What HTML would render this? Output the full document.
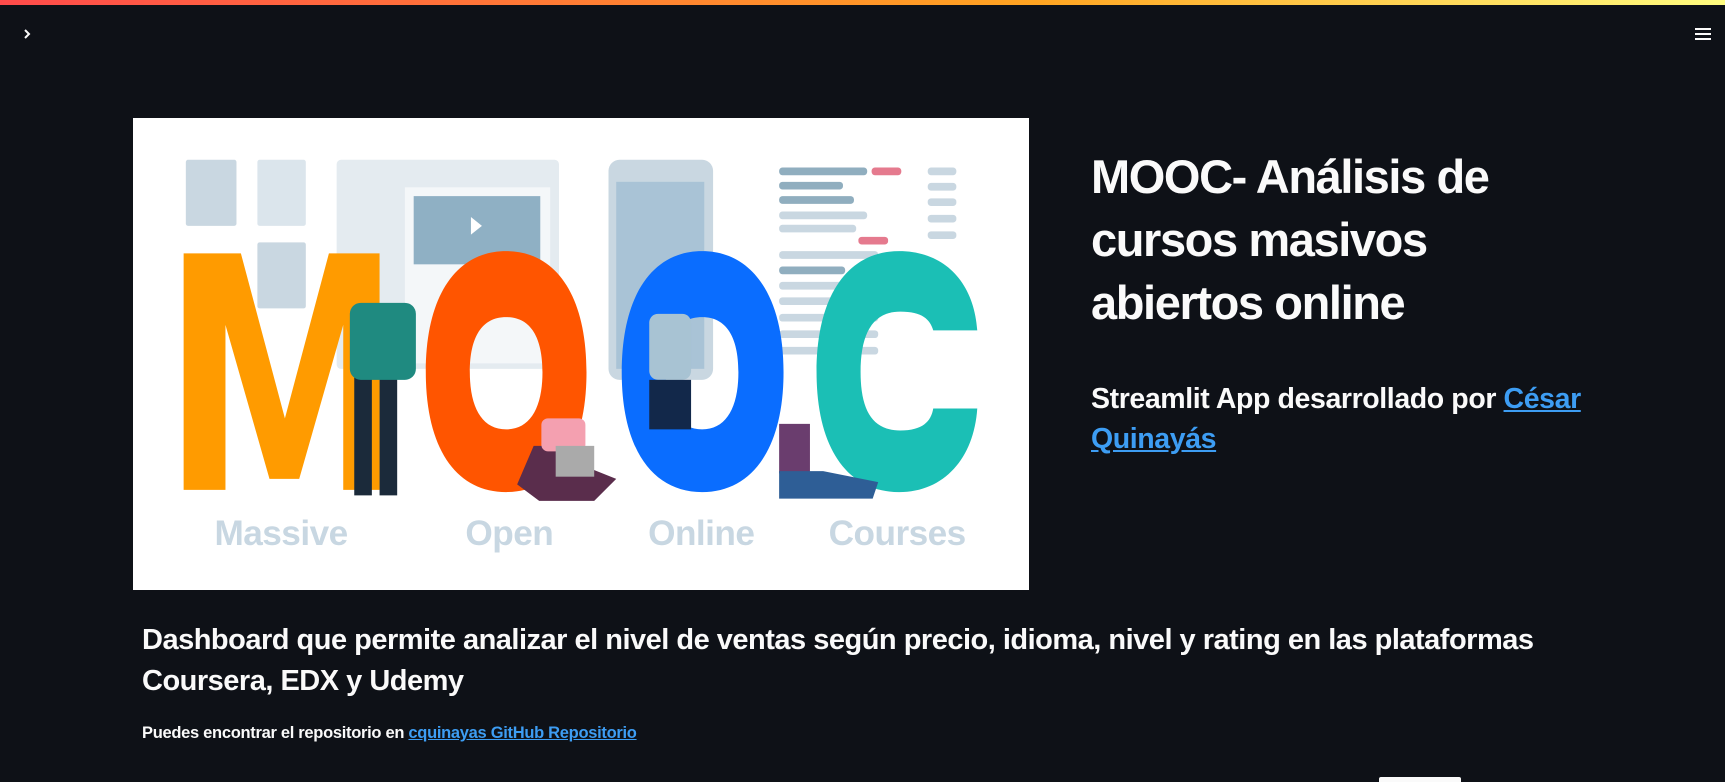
<!DOCTYPE html>
<html><head><meta charset="utf-8">
<style>
html,body{margin:0;padding:0;width:1725px;height:782px;overflow:hidden;background:#0e1117;font-family:"Liberation Sans",sans-serif;color:#fafafa}
.bar{position:absolute;left:0;top:0;width:1725px;height:5px;background:linear-gradient(90deg,#ff4b4b,#ffa421 60%,#fffd80)}
.abs{position:absolute}
a{color:#3d9df3;text-decoration:underline}
h1{position:absolute;left:1091px;top:145px;margin:0;font-size:47px;line-height:63px;letter-spacing:-1.4px;font-weight:bold;width:440px}
.sub{left:1091px;top:379px;font-size:28.5px;line-height:40px;font-weight:bold;letter-spacing:-0.4px;width:510px}
.dash{left:142px;top:620px;font-size:29px;line-height:41px;font-weight:bold;letter-spacing:-0.5px;width:1420px}
.small{left:142px;top:723px;font-size:16.5px;line-height:20px;font-weight:bold;letter-spacing:-0.3px}
</style></head><body>
<div class="bar"></div>
<svg class="abs" style="left:20px;top:27px" width="14" height="14" viewBox="0 0 14 14"><path d="M5 3l4 4-4 4" stroke="#fafafa" stroke-width="2" fill="none"/></svg>
<svg class="abs" style="left:1693px;top:26px" width="20" height="16" viewBox="0 0 20 16"><path d="M2 3h16M2 8h16M2 13h16" stroke="#fafafa" stroke-width="2"/></svg>

<svg class="abs" style="left:133px;top:118px" width="896" height="472" viewBox="121 107 814 429" preserveAspectRatio="none">
<rect x="121" y="107" width="814" height="429" fill="#fff"/>
<g fill="#dbe5ec">
<rect x="169" y="145" width="46" height="60" rx="2" fill="#c9d7e1"/>
<rect x="234" y="145" width="44" height="60" rx="2"/>
<rect x="234" y="220" width="44" height="60" rx="2" fill="#c9d7e1"/>
<rect x="306" y="145" width="202" height="190" rx="4" fill="#e4ebf0"/>
<rect x="368" y="170" width="132" height="160" fill="#f4f7f9"/>
<rect x="376" y="178" width="115" height="62" fill="#8fb0c4"/>
<rect x="553" y="145" width="95" height="200" rx="10" fill="#c9d7e1"/>
<rect x="560" y="165" width="80" height="170" fill="#a9c3d6"/>
</g>
<path d="M428 197l10 8-10 8z" fill="#fff"/>
<g fill="#c9d7e1">
<rect x="708" y="152" width="80" height="7" rx="3" fill="#90aebf"/><rect x="792" y="152" width="27" height="7" rx="3" fill="#e57a8e"/>
<rect x="708" y="165" width="58" height="7" rx="3" fill="#90aebf"/><rect x="708" y="178" width="68" height="7" rx="3" fill="#90aebf"/>
<rect x="708" y="192" width="80" height="7" rx="3"/><rect x="708" y="204" width="70" height="7" rx="3"/>
<rect x="780" y="215" width="27" height="7" rx="3" fill="#e57a8e"/><rect x="708" y="228" width="90" height="7" rx="3"/>
<rect x="708" y="242" width="60" height="7" rx="3" fill="#90aebf"/><rect x="708" y="256" width="90" height="7" rx="3"/>
<rect x="708" y="270" width="90" height="7" rx="3"/><rect x="708" y="285" width="90" height="7" rx="3"/><rect x="708" y="300" width="90" height="7" rx="3"/><rect x="708" y="315" width="90" height="7" rx="3"/>
<rect x="843" y="152" width="26" height="7" rx="3"/><rect x="843" y="166" width="26" height="7" rx="3"/><rect x="843" y="180" width="26" height="7" rx="3"/><rect x="843" y="195" width="26" height="7" rx="3"/><rect x="843" y="210" width="26" height="7" rx="3"/>
</g>
<path d="M167 230h52l40 150 40-150h46v215h-33v-150l-40 140h-27l-40-140v150h-38z" fill="#ff9b00"/>
<path fill="#ff5500" fill-rule="evenodd" d="M460 228c45 0 73 40 73 110s-28 109-73 109-73-39-73-109 28-110 73-110zM460 288c-22 0-33 18-33 50s11 52 33 52 33-20 33-52-11-50-33-50z"/>
<path fill="#0a6dff" fill-rule="evenodd" d="M638 228c45 0 74 40 74 110s-29 109-74 109-73-39-73-109 28-110 73-110zM638 288c-22 0-33 18-33 50s11 52 33 52 33-20 33-52-11-50-33-50z"/>
<path fill="#1bbfb5" d="M888 300h-40c-3-10-10-17-30-17-25 0-36 20-36 55s11 53 36 53c20 0 28-8 30-20h40c-3 45-30 76-71 76-47 0-75-40-75-109s28-110 75-110c41 0 68 28 71 72z"/>
<g fill="#1b2a3a"><rect x="322" y="335" width="16" height="115"/><rect x="345" y="335" width="16" height="115"/></g>
<rect x="318" y="275" width="60" height="70" rx="10" fill="#1f8a80"/>
<rect x="590" y="285" width="38" height="60" rx="8" fill="#a8c3d3"/><rect x="590" y="345" width="38" height="45" fill="#12284a"/>
<path d="M485 405h40l10 20 25 10-20 20h-50l-20-15z" fill="#5a2d4c"/><rect x="492" y="380" width="40" height="30" rx="6" fill="#f4a0b0"/><rect x="505" y="405" width="35" height="28" fill="#aaa"/>
<path d="M708 385h28v45h-28z" fill="#6a3d6e"/><path d="M708 428h40l50 10-5 15h-85z" fill="#2e5e96"/>
<g font-family="Liberation Sans,sans-serif" font-weight="bold" font-size="32" fill="#c8d7e2" letter-spacing="-0.5">
<text x="195" y="495">Massive</text><text x="423" y="495">Open</text><text x="589" y="495">Online</text><text x="753" y="495">Courses</text>
</g>
</svg>

<h1>MOOC- Análisis de cursos masivos abiertos online</h1>
<div class="abs sub">Streamlit App desarrollado por <a>César Quinayás</a></div>
<div class="abs dash">Dashboard que permite analizar el nivel de ventas según precio, idioma, nivel y rating en las plataformas Coursera, EDX y Udemy</div>
<div class="abs small">Puedes encontrar el repositorio en <a>cquinayas GitHub Repositorio</a></div>
<div class="abs" style="left:1379px;top:777px;width:82px;height:5px;background:#fafafa;border-radius:2px 2px 0 0"></div>
</body></html>
